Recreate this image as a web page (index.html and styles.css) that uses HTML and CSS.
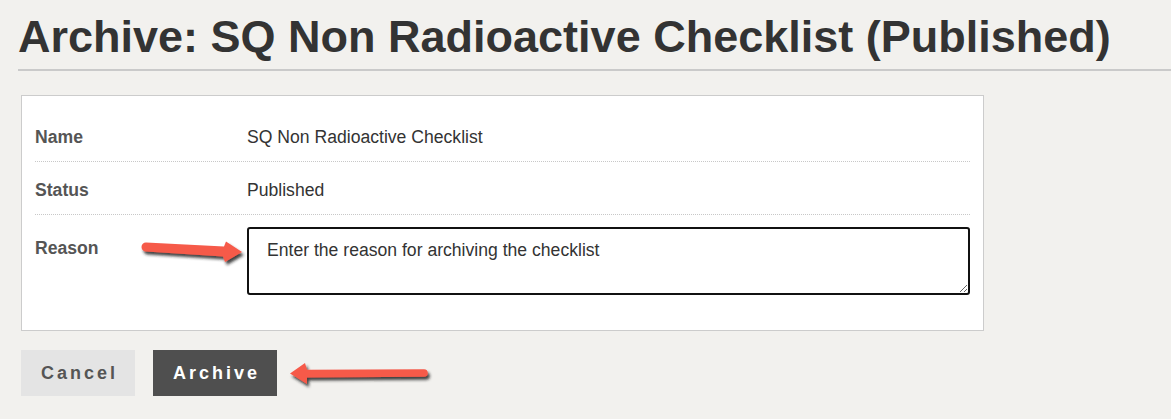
FILE: index.html
```html
<!DOCTYPE html>
<html>
<head>
<meta charset="utf-8" />
<title>Archive checklist</title>
<link rel="stylesheet" href="styles.css">
</head>
<body>
<div class="page">
    <h1 class="title">Archive: SQ Non Radioactive Checklist (Published)</h1>
    <div class="content">
        <div class="panel">
            <div class="row">
                <div class="label">Name</div>
                <div class="value">SQ Non Radioactive Checklist</div>
            </div>
            <div class="row">
                <div class="label">Status</div>
                <div class="value">Published</div>
            </div>
            <div class="row row-last">
                <div class="label label-reason">Reason</div>
                <div class="value">
                    <textarea class="reason">Enter the reason for archiving the checklist</textarea>
                </div>
            </div>
        </div>
        <div class="actions">
            <button class="btn btn-cancel">Cancel</button>
            <button class="btn btn-archive">Archive</button>
        </div>
    </div>
</div>

<!-- annotation arrows drawn over the page -->
<svg class="arrow arrow-reason" viewBox="136 236 115 35" width="115" height="35">
    <defs>
        <filter id="shadow1" x="-20%" y="-50%" width="140%" height="200%">
            <feDropShadow dx="2" dy="3" stdDeviation="1.4" flood-color="#222" flood-opacity="0.85"/>
        </filter>
    </defs>
    <path filter="url(#shadow1)" fill="#f65a4a"
          d="M146,242.5 L224,246.5 L226,241.5 L242,252 L225,262 L223,256.5 L146,251.5 A4.5,4.5 0 0 1 146,242.5 Z"/>
</svg>
<svg class="arrow arrow-archive" viewBox="284 356 152 34" width="152" height="34">
    <defs>
        <filter id="shadow2" x="-20%" y="-50%" width="140%" height="200%">
            <feDropShadow dx="2" dy="3" stdDeviation="1.4" flood-color="#222" flood-opacity="0.85"/>
        </filter>
    </defs>
    <path filter="url(#shadow2)" fill="#f65a4a"
          d="M290,373.5 L305,363 L307,369.8 L424,369.2 A3.8,3.8 0 0 1 424,376.8 L307,377.4 L307,384 Z"/>
</svg>
</body>
</html>
```

FILE: styles.css
```css
*{ margin:0; padding:0; box-sizing:border-box;}
body{ background:#f2f1ee; font-family:"Liberation Sans", Arial, sans-serif; color:#333; font-size:17.6px;}
.page{ padding-top:11px;}

.title{ margin-left:18px; padding-bottom:6px; font-size:45px; line-height:normal; font-weight:bold; color:#333; border-bottom:2px solid #cacaca;}

.content{ padding:24px 21px 0;}
.panel{ width:963px; background:#fff; border:1px solid #cccccc; padding:13px 13px 23px;}
.row{ display:flex; padding:17px 0 12px; line-height:23px; border-bottom:1px dotted #c8c8c8;}
.row-last{ border-bottom:none; padding-top:12px; padding-bottom:12px;}
.label{ width:212px; flex:none; font-weight:bold; color:#555;}
.label-reason{ padding-top:10px;}
.value{ flex:1; color:#333;}

.reason{ display:block; width:100%; height:68px; border:2px solid #111; border-radius:3px; padding:10px 18px; font-family:"Liberation Sans", Arial, sans-serif; font-size:17.6px; line-height:23px; color:#333; resize:both; outline:none;}

.actions{ display:flex; gap:18px; margin-top:19px;}
.btn{ height:46px; padding:0 17px 0 20px; border:none; font-family:"Liberation Sans", Arial, sans-serif; font-size:18px; font-weight:bold; letter-spacing:3px; cursor:pointer;}
.btn-cancel{ background:#e4e4e4; color:#555;}
.btn-archive{ background:#4f4f4f; color:#fff;}

.arrow{ position:absolute; overflow:visible;}
.arrow-reason{ left:136px; top:236px;}
.arrow-archive{ left:284px; top:356px;}
```
